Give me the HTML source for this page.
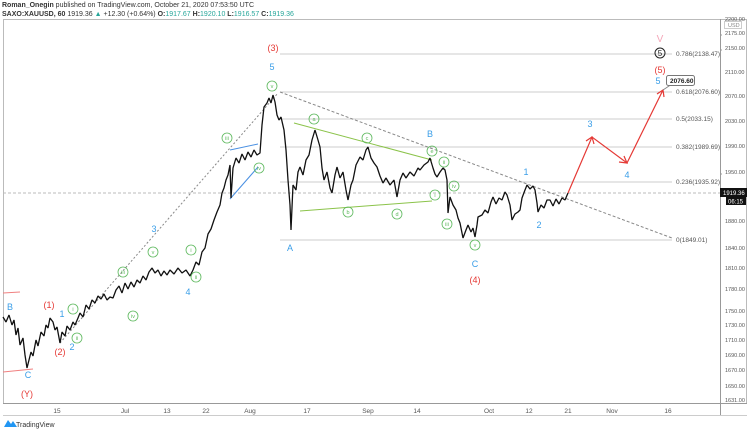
<!DOCTYPE html>
<html><head><meta charset="utf-8"><style>
html,body{margin:0;padding:0;background:#fff;width:750px;height:430px;overflow:hidden;font-family:"Liberation Sans",sans-serif}
svg text{font-family:"Liberation Sans",sans-serif}
</style></head><body>
<svg width="750" height="430" viewBox="0 0 750 430" xmlns="http://www.w3.org/2000/svg">
<text x="2" y="7" font-size="7" fill="#333"><tspan font-weight="bold">Roman_Onegin</tspan> published on TradingView.com, October 21, 2020 07:53:50 UTC</text>
<text x="2" y="16" font-size="7" fill="#333"><tspan font-weight="bold">SAXO:XAUUSD, 60</tspan> 1919.36 <tspan fill="#26a69a">▲</tspan> +12.30 (+0.64%) <tspan font-weight="bold">O:</tspan><tspan fill="#26a69a">1917.67</tspan> <tspan font-weight="bold">H:</tspan><tspan fill="#26a69a">1920.10</tspan> <tspan font-weight="bold">L:</tspan><tspan fill="#26a69a">1916.57</tspan> <tspan font-weight="bold">C:</tspan><tspan fill="#26a69a">1919.36</tspan></text>
<rect x="3.5" y="19.5" width="743" height="384" fill="none" stroke="#bbb"/>
<line x1="720.5" y1="19" x2="720.5" y2="415" stroke="#999"/>
<line x1="3" y1="403.5" x2="747" y2="403.5" stroke="#999"/>
<line x1="3" y1="415.5" x2="747" y2="415.5" stroke="#ccc"/>
<g stroke="#ccc" stroke-width="1">
<line x1="280" y1="54" x2="672" y2="54"/><line x1="280" y1="92" x2="672" y2="92"/>
<line x1="280" y1="119" x2="672" y2="119"/><line x1="280" y1="147" x2="672" y2="147"/>
<line x1="280" y1="182" x2="672" y2="182"/><line x1="280" y1="240" x2="672" y2="240"/>
</g>
<line x1="3" y1="193" x2="720" y2="193" stroke="#bbb" stroke-dasharray="3,2"/>
<g font-size="6.5" fill="#555">
<text x="676" y="56">0.786(2138.47)</text><text x="676" y="94">0.618(2076.60)</text>
<text x="676" y="121">0.5(2033.15)</text><text x="676" y="149">0.382(1989.69)</text>
<text x="676" y="184">0.236(1935.92)</text><text x="676" y="242">0(1849.01)</text>
</g>
<line x1="60" y1="343" x2="278" y2="93" stroke="#888" stroke-dasharray="2,2"/>
<line x1="280" y1="92" x2="672" y2="238" stroke="#888" stroke-dasharray="3,2"/>
<line x1="294" y1="123" x2="432" y2="160" stroke="#8bc34a"/>
<line x1="300" y1="211" x2="432" y2="201" stroke="#8bc34a"/>
<line x1="230" y1="150" x2="258" y2="144" stroke="#4a90e2"/>
<line x1="230" y1="199" x2="258" y2="167" stroke="#4a90e2"/>
<line x1="3" y1="293" x2="20" y2="292" stroke="#f08080"/>
<line x1="3" y1="372" x2="33" y2="369" stroke="#f08080"/>
<polyline fill="none" stroke="#111" stroke-width="1.3" stroke-linejoin="bevel" points="3,317 6,322 9,315 12,325 14,320 16,335 18,328 20,345 23,338 25,355 27,368 29,360 31,352 33,356 36,340 38,346 41,332 44,336 46,325 48,328 50,318 53,322 55,330 57,327 60,343 62,332 65,336 67,326 70,330 73,322 75,325 78,318 80,313 83,317 86,305 89,309 92,300 95,303 98,296 101,299 104,294 107,300 110,297 113,298 116,290 119,286 122,293 125,283 128,289 131,282 134,287 137,280 140,283 143,276 146,280 149,272 152,268 155,273 158,270 161,276 164,271 167,275 170,270 174,274 178,268 182,273 186,270 190,276 193,270 196,262 199,265 202,252 205,248 208,234 211,229 214,220 217,212 220,205 222,193 224,188 226,180 228,175 230,165 231,198 233,168 236,158 239,163 242,154 245,160 248,152 251,157 254,150 257,155 260,153 262,125 264,107 267,103 269,98 271,103 273,95 275,102 277,115 279,120 281,117 284,130 286,150 288,180 290,205 291,230 293,185 296,190 298,172 300,167 303,175 306,160 309,155 312,140 315,130 318,140 320,147 322,168 324,180 327,172 330,188 332,193 335,175 337,167 340,178 343,172 346,190 348,200 351,185 353,180 356,165 360,157 363,160 366,150 368,147 371,158 374,163 377,167 380,176 383,183 386,178 390,185 394,180 397,197 400,180 403,173 406,178 410,172 414,176 418,168 420,170 424,165 428,162 430,158 433,168 435,174 437,177 440,172 443,168 445,170 447,180 448,213 450,197 453,205 456,210 458,218 460,223 463,238 466,230 468,225 471,232 473,228 475,237 477,225 478,217 482,215 485,210 488,213 491,202 493,197 496,204 499,198 502,200 505,192 507,195 510,205 512,220 515,214 518,212 520,210 522,198 525,190 527,185 530,189 533,186 535,190 537,203 538,212 541,205 544,208 547,200 550,200 553,206 556,199 559,204 562,198 565,200 568,193"/>
<g stroke="#e53935" stroke-width="1.2" fill="none">
<polyline points="568,193 592,137 627,163 663,90"/>
<polyline points="586,141 592,137 594,144"/>
<polyline points="619,162 627,163 624,156"/>
<polyline points="657,94 663,90 664,97"/>
</g>
<line x1="663" y1="90" x2="672" y2="84" stroke="#888"/>
<rect x="666.5" y="75.5" width="28" height="10" rx="2" fill="#fff" stroke="#777"/>
<text x="670" y="83" font-size="6.5" font-weight="bold" fill="#222">2076.60</text>
<g font-size="9" text-anchor="middle">
<g fill="#3a9ee8">
<text x="10" y="310">B</text><text x="28" y="378">C</text><text x="62" y="317">1</text><text x="72" y="350">2</text>
<text x="154" y="232">3</text><text x="188" y="295">4</text><text x="272" y="70">5</text><text x="290" y="251">A</text>
<text x="430" y="137">B</text><text x="475" y="267">C</text><text x="526" y="175">1</text><text x="539" y="228">2</text>
<text x="590" y="127">3</text><text x="627" y="178">4</text><text x="658" y="84">5</text>
</g>
<g fill="#e53935">
<text x="49" y="308">(1)</text><text x="60" y="355">(2)</text><text x="273" y="51">(3)</text><text x="475" y="283">(4)</text>
<text x="660" y="73">(5)</text><text x="27" y="397">(Y)</text>
</g>
<text x="660" y="42" fill="#f4a6b8" font-size="10">V</text>
</g>
<circle cx="660" cy="53" r="5" fill="none" stroke="#222"/>
<text x="660" y="56" font-size="8" text-anchor="middle" fill="#222">5</text>
<g fill="none" stroke="#5cb85c" stroke-width="0.8">
<circle cx="73" cy="309" r="5"/><circle cx="77" cy="338" r="5"/><circle cx="123" cy="272" r="5"/><circle cx="153" cy="252" r="5"/>
<circle cx="133" cy="316" r="5"/><circle cx="191" cy="250" r="5"/><circle cx="196" cy="277" r="5"/><circle cx="227" cy="138" r="5"/>
<circle cx="259" cy="168" r="5"/><circle cx="272" cy="86" r="5"/><circle cx="314" cy="119" r="5"/><circle cx="367" cy="138" r="5"/>
<circle cx="432" cy="151" r="5"/><circle cx="444" cy="162" r="5"/><circle cx="435" cy="195" r="5"/><circle cx="454" cy="186" r="5"/>
<circle cx="447" cy="224" r="5"/><circle cx="475" cy="245" r="5"/><circle cx="348" cy="212" r="5"/><circle cx="397" cy="214" r="5"/>
</g>
<g font-size="5.5" fill="#5cb85c" text-anchor="middle">
<text x="73" y="311">i</text><text x="77" y="340">ii</text><text x="123" y="274">iii</text><text x="153" y="254">v</text>
<text x="133" y="318">iv</text><text x="191" y="252">i</text><text x="196" y="279">ii</text><text x="227" y="140">iii</text>
<text x="259" y="170">iv</text><text x="272" y="88">v</text><text x="314" y="121">a</text><text x="367" y="140">c</text>
<text x="432" y="153">e</text><text x="444" y="164">ii</text><text x="435" y="197">i</text><text x="454" y="188">iv</text>
<text x="447" y="226">iii</text><text x="475" y="247">v</text><text x="348" y="214">b</text><text x="397" y="216">d</text>
</g>
<g stroke="#999"><line x1="720" y1="35" x2="722" y2="35"/><line x1="720" y1="50" x2="722" y2="50"/><line x1="720" y1="174" x2="722" y2="174"/></g>
<g font-size="5.5" fill="#555">
<text x="725" y="21">2200.00</text><text x="725" y="35">2175.00</text><text x="725" y="50">2150.00</text>
<text x="725" y="74">2110.00</text><text x="725" y="98">2070.00</text><text x="725" y="123">2030.00</text>
<text x="725" y="148">1990.00</text><text x="725" y="174">1950.00</text><text x="725" y="223">1880.00</text>
<text x="725" y="250">1840.00</text><text x="725" y="270">1810.00</text><text x="725" y="291">1780.00</text>
<text x="725" y="313">1750.00</text><text x="725" y="327">1730.00</text><text x="725" y="342">1710.00</text>
<text x="725" y="357">1690.00</text><text x="725" y="372">1670.00</text><text x="725" y="388">1650.00</text>
<text x="725" y="402">1631.00</text>
</g>
<rect x="724.5" y="21.5" width="17" height="7" fill="#fff" stroke="#ccc"/>
<text x="728" y="27" font-size="5.5" fill="#888">USD</text>
<rect x="720" y="188" width="27" height="9" fill="#111"/>
<text x="723" y="195" font-size="6" fill="#fff">1919.36</text>
<rect x="726" y="197" width="20" height="8" fill="#111"/>
<text x="728" y="203.5" font-size="6" fill="#fff">06:15</text>
<g font-size="6.5" fill="#555" text-anchor="middle">
<text x="57" y="413">15</text><text x="125" y="413">Jul</text><text x="167" y="413">13</text><text x="206" y="413">22</text>
<text x="250" y="413">Aug</text><text x="307" y="413">17</text><text x="368" y="413">Sep</text><text x="417" y="413">14</text>
<text x="489" y="413">Oct</text><text x="529" y="413">12</text><text x="568" y="413">21</text><text x="612" y="413">Nov</text><text x="668" y="413">16</text>
</g>
<path d="M4,427 L8,420 L11,424 L13,421 L17,427 Z" fill="#2196f3"/>
<text x="16" y="427" font-size="7" fill="#333">TradingView</text>
</svg>
</body></html>
